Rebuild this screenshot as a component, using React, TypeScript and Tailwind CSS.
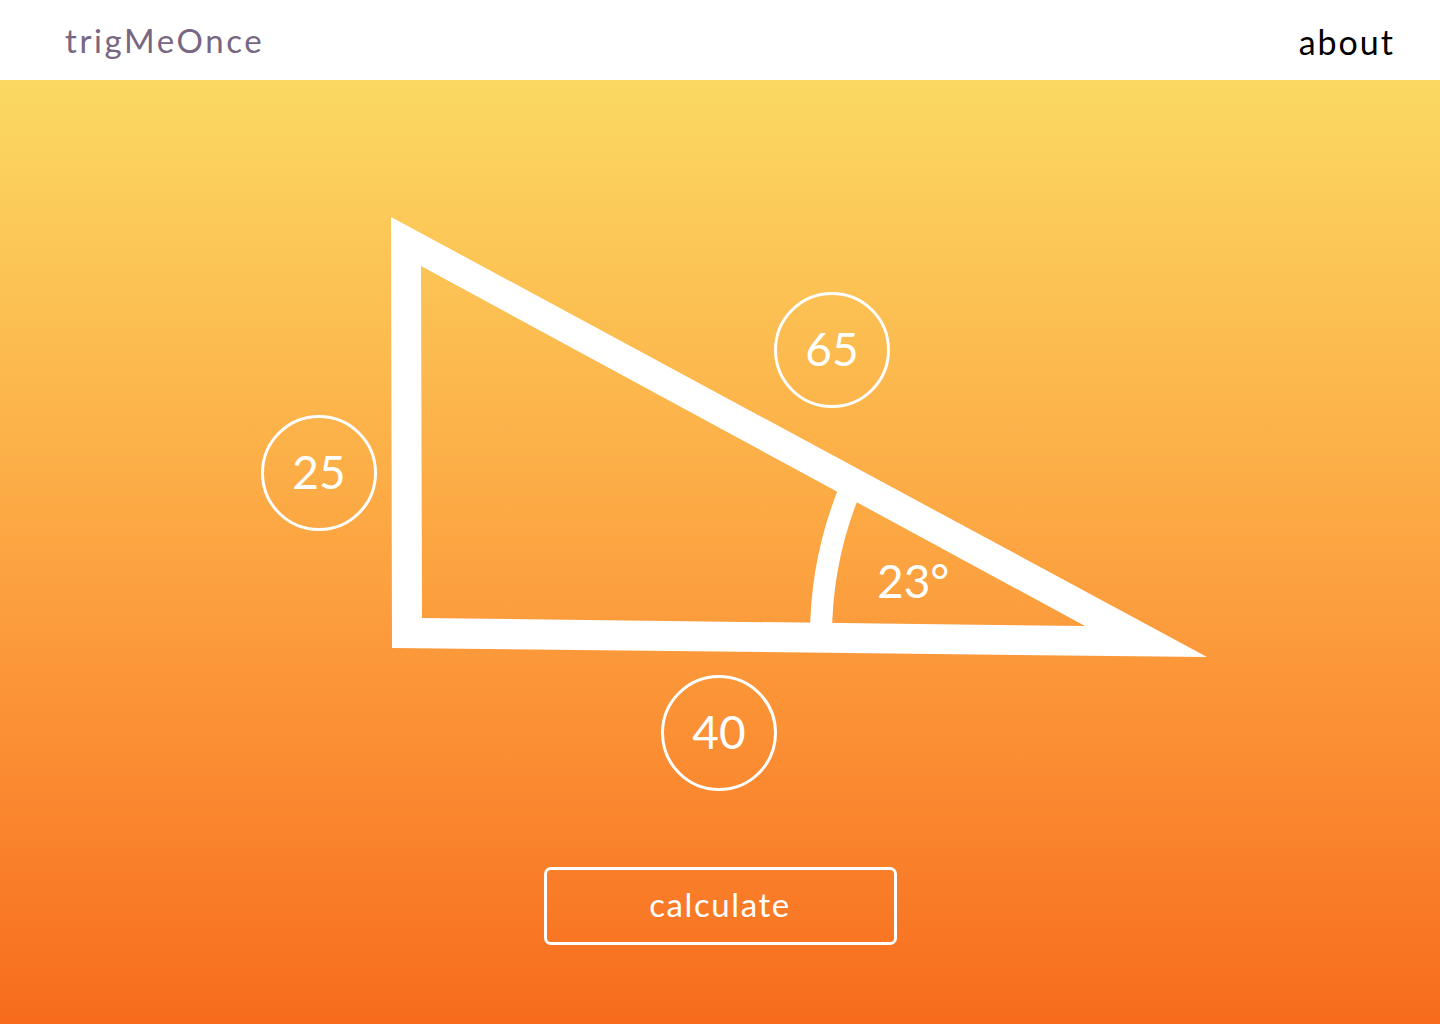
import React from "react";

const font = { fontFamily: "Lato, 'Open Sans', sans-serif" };

function Badge({ value, className }: { value: string; className: string }) {
  return (
    <div
      className={`absolute flex h-[116px] w-[116px] items-center justify-center rounded-full border-[3.5px] border-white text-[46px] leading-none text-white ${className}`}
    >
      <span className="pb-[2px]">{value}</span>
    </div>
  );
}

export default function App() {
  return (
    <div className="flex h-[1024px] w-[1440px] flex-col overflow-hidden" style={font}>
      <header className="flex h-20 shrink-0 items-center justify-between bg-white pl-[65px] pr-[45px]">
        <div className="pt-[2px] text-[33px] tracking-[2.6px] text-[#786682]">trigMeOnce</div>
        <div className="pt-[2px] text-[34px] tracking-[2px] text-black">about</div>
      </header>
      <main className="relative flex flex-1 flex-col items-center justify-end bg-linear-to-b from-[#fad961] to-[#f76b1c] pb-[79px]">
        <svg className="absolute inset-0" width="1440" height="944" viewBox="0 0 1440 944">
          <path
            fillRule="evenodd"
            fill="#ffffff"
            d="M391 137 L392 568 L1207 577 Z M421 186 L422 538 L1085 546 Z"
          />
          <path
            d="M854 400 A 387 387 0 0 0 821 556"
            fill="none"
            stroke="#ffffff"
            strokeWidth="22"
          />
        </svg>
        <div className="absolute left-[877px] top-[478px] text-[46px] leading-none text-white">23°</div>
        <Badge value="65" className="left-[774px] top-[212px]" />
        <Badge value="25" className="left-[261px] top-[335px]" />
        <Badge value="40" className="left-[661px] top-[595px]" />
        <button className="relative flex h-[78px] w-[353px] items-center justify-center rounded-[7px] border-[3px] border-white pb-[3px] text-[33px] tracking-[1.6px] text-white">
          calculate
        </button>
      </main>
    </div>
  );
}
